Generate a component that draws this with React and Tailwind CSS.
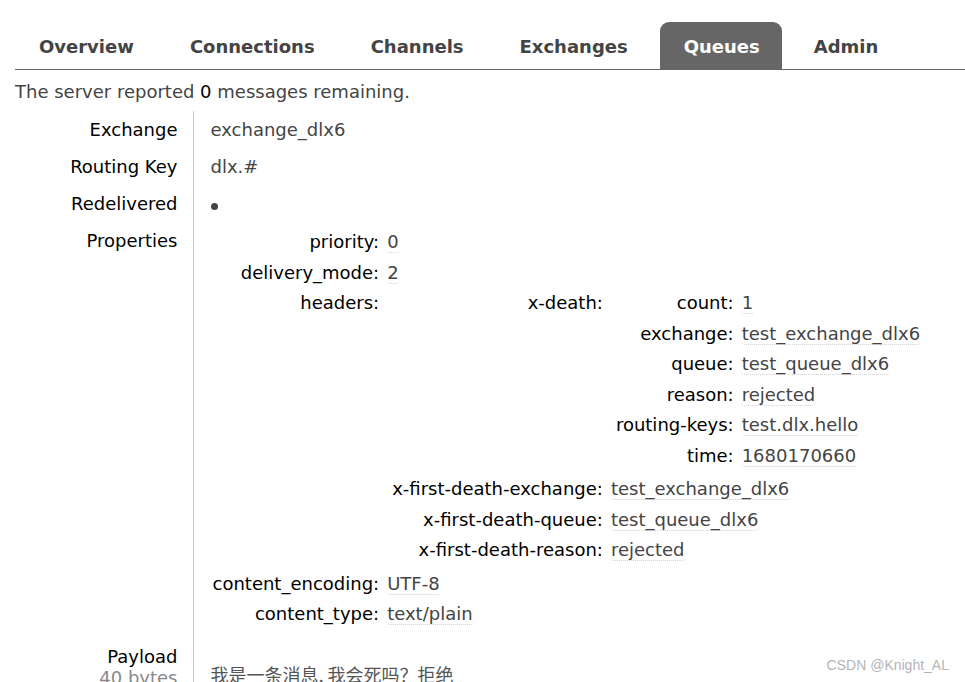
const tabs = ["Overview", "Connections", "Channels", "Exchanges", "Queues", "Admin"];

const Val = ({ children }) => (
  <span className="border-b border-dotted border-[#cfcfcf] rounded-b-[4px] px-px">{children}</span>
);

// key padding per nesting level
const keyPad = ["pl-[3px]", "pl-[6px]", "pl-[6px]"];

// key/value table used for properties and headers, nests itself
const KV = ({ rows, level = 0 }) => (
  <table className="border-collapse">
    <tbody>
      {rows.map(([k, v]) => (
        <tr key={k}>
          <th
            className={`${keyPad[level]} text-right align-top font-normal text-black pr-[3px] pt-[4px] pb-[4.5px] leading-[22px] whitespace-nowrap`}
          >
            {k}:
          </th>
          {Array.isArray(v) ? (
            <td className="align-top pl-[4px] pb-[3px]">
              <KV rows={v} level={level + 1} />
            </td>
          ) : (
            <td className="align-top text-[#444] pl-[4px] pt-[4px] pb-[4.5px] leading-[22px] whitespace-nowrap">
              <Val>{v}</Val>
            </td>
          )}
        </tr>
      ))}
    </tbody>
  </table>
);

const props = [
  ["priority", "0"],
  ["delivery_mode", "2"],
  [
    "headers",
    [
      [
        "x-death",
        [
          ["count", "1"],
          ["exchange", "test_exchange_dlx6"],
          ["queue", "test_queue_dlx6"],
          ["reason", "rejected"],
          ["routing-keys", "test.dlx.hello"],
          ["time", "1680170660"],
        ],
      ],
      ["x-first-death-exchange", "test_exchange_dlx6"],
      ["x-first-death-queue", "test_queue_dlx6"],
      ["x-first-death-reason", "rejected"],
    ],
  ],
  ["content_encoding", "UTF-8"],
  ["content_type", "text/plain"],
];

const thMain = "w-[178px] pr-[15px] text-right align-top font-normal text-black leading-[21px]";
const tdMain = "border-l border-[#cccccc] pl-[17px] align-top text-[#444] leading-[21px]";

export default function App() {
  return (
    <div
      className="relative h-[682px] overflow-hidden bg-white pl-[15px] text-[18px]"
      style={{ fontFamily: '"DejaVu Sans", Verdana, sans-serif' }}
    >
      <div className="mt-[22px] flex gap-[8px] border-b border-[#666]">
        {tabs.map((t) => (
          <div
            key={t}
            className={
              t === "Queues"
                ? "h-[47px] flex items-center pt-[2px] pl-[24px] pr-[22px] rounded-t-[9px] bg-[#666] text-white font-bold text-[18px]"
                : "h-[47px] flex items-center pt-[2px] px-[24px] text-[#444] font-bold text-[18px]"
            }
          >
            {t}
          </div>
        ))}
      </div>

      <p className="mt-[11px] leading-[21px] text-[#444]">
        The server reported <b className="font-normal text-black">0</b> messages remaining.
      </p>

      <table className="mt-[9px] border-collapse">
        <tbody>
          <tr>
            <th className={`${thMain} py-[8px]`}>Exchange</th>
            <td className={`${tdMain} py-[8px]`}>exchange_dlx6</td>
          </tr>
          <tr>
            <th className={`${thMain} py-[8px]`}>Routing Key</th>
            <td className={`${tdMain} py-[8px]`}>dlx.#</td>
          </tr>
          <tr>
            <th className={`${thMain} py-[8px]`}>Redelivered</th>
            <td className={`${tdMain} py-[8px]`}>
              <span className="inline-block w-[7px] h-[7px] rounded-full bg-[#444] align-[0px]" />
            </td>
          </tr>
          <tr>
            <th className={`${thMain} pt-[8px] pb-[9.5px]`}>Properties</th>
            <td className="border-l border-[#cccccc] pl-[16px] align-top pt-[5px] pb-[8.5px]">
              <KV rows={props} />
            </td>
          </tr>
          <tr>
            <th className={`${thMain} pt-[8px] pb-[20px] leading-[19px]`}>
              Payload
              <br />
              <span className="text-[#888]">40 bytes</span>
            </th>
            <td className={`${tdMain} pt-[8px]`}>
              <div
                className="mt-[18px] text-[18px] text-[#555] leading-[21px]"
                style={{ fontFamily: '"Noto Sans CJK SC", serif' }}
              >
                我是一条消息, 我会死吗？拒绝
              </div>
            </td>
          </tr>
        </tbody>
      </table>

      <div
        className="absolute right-[16px] bottom-[6px] text-[14px] text-[#b5b5b5]"
        style={{ fontFamily: '"Liberation Sans", Arial, sans-serif' }}
      >
        CSDN @Knight_AL
      </div>
    </div>
  );
}
